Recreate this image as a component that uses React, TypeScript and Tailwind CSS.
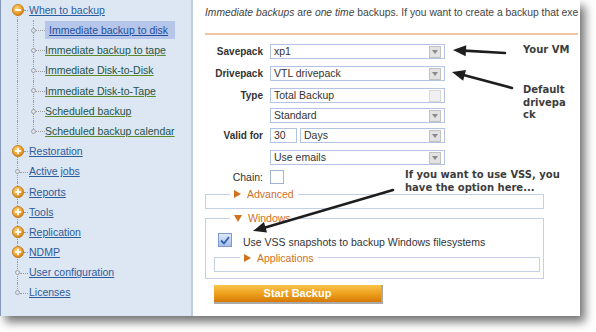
import React from "react";

const UI = { fontFamily: '"Liberation Sans", Arial, sans-serif' };
const ANN = { fontFamily: '"DejaVu Sans", Verdana, sans-serif' };

function OrangeIcon({ plus }: { plus: boolean }) {
  return (
    <svg width="12" height="12" viewBox="0 0 12 12" className="block">
      <defs>
        <radialGradient id={plus ? "gp" : "gm"} cx="40%" cy="35%" r="70%">
          <stop offset="0%" stopColor="#fcd27a" />
          <stop offset="60%" stopColor="#eea131" />
          <stop offset="100%" stopColor="#c8780e" />
        </radialGradient>
      </defs>
      <circle cx="6" cy="6" r="5.6" fill={`url(#${plus ? "gp" : "gm"})`} stroke="#c07612" strokeWidth="0.8" />
      <rect x="2.8" y="5.1" width="6.4" height="1.8" fill="#fff" />
      {plus && <rect x="5.1" y="2.8" width="1.8" height="6.4" fill="#fff" />}
    </svg>
  );
}

type Item = { label: string; kind: "minus" | "plus" | "leaf"; first?: boolean; last?: boolean };

const subItems = [
  "Immediate backup to disk",
  "Immediate backup to tape",
  "Immediate Disk-to-Disk",
  "Immediate Disk-to-Tape",
  "Scheduled backup",
  "Scheduled backup calendar",
];

const topItems: Item[] = [
  { label: "Restoration", kind: "plus" },
  { label: "Active jobs", kind: "leaf" },
  { label: "Reports", kind: "plus" },
  { label: "Tools", kind: "plus" },
  { label: "Replication", kind: "plus" },
  { label: "NDMP", kind: "plus" },
  { label: "User configuration", kind: "leaf" },
  { label: "Licenses", kind: "leaf", last: true },
];

function TopRow({ item }: { item: Item }) {
  return (
    <div className="relative flex items-center h-[20.2px]">
      <div
        className={`absolute left-[16px] border-l border-dotted border-[#9a9a9a] ${
          item.last ? "top-0 h-1/2" : item.first ? "top-1/2 bottom-0" : "top-0 bottom-0"
        }`}
      />
      {item.kind === "leaf" ? (
        <>
          <div className="absolute left-[14px] top-1/2 -mt-[2.5px] w-[5px] h-[5px] rounded-full border border-[#a0a0a0] bg-[#dde6f3]" />
          <div className="absolute left-[19px] top-1/2 w-[8px] border-t border-dotted border-[#9a9a9a]" />
        </>
      ) : (
        <>
          <div className="absolute left-[11px] top-1/2 -mt-[6px]">
            <OrangeIcon plus={item.kind === "plus"} />
          </div>
          <div className="absolute left-[23px] top-1/2 w-[4px] border-t border-dotted border-[#9a9a9a]" />
        </>
      )}
      <a className="ml-[28px] text-[10.5px] leading-none underline text-[#2c5c9c]">{item.label}</a>
    </div>
  );
}

function SubRow({ label, idx }: { label: string; idx: number }) {
  const last = idx === subItems.length - 1;
  const active = idx === 0;
  return (
    <div className="relative flex items-center h-[20.2px]">
      <div className="absolute left-[16px] top-0 bottom-0 border-l border-dotted border-[#9a9a9a]" />
      <div
        className={`absolute left-[32px] border-l border-dotted border-[#9a9a9a] ${
          last ? "top-0 h-1/2" : "top-0 bottom-0"
        }`}
      />
      <div className="absolute left-[30px] top-1/2 -mt-[2.5px] w-[5px] h-[5px] rounded-full border border-[#a0a0a0] bg-[#dde6f3]" />
      <div className="absolute left-[35px] top-1/2 w-[9px] border-t border-dotted border-[#9a9a9a]" />
      {active ? (
        <div className="ml-[44px] h-[18px] w-[130px] bg-[#b6c5ea] flex items-center pl-[4px]">
          <a className="text-[10.5px] leading-none underline text-[#24509a]">{label}</a>
        </div>
      ) : (
        <a className="ml-[44px] text-[10.5px] leading-none underline text-[#225449] decoration-[#5f8a2a]">{label}</a>
      )}
    </div>
  );
}

function Arrow({ x1, y1, x2, y2 }: { x1: number; y1: number; x2: number; y2: number }) {
  const dx = x2 - x1;
  const dy = y2 - y1;
  const len = Math.hypot(dx, dy);
  const ux = dx / len;
  const uy = dy / len;
  const hl = 13;
  const hw = 5.5;
  const bx = x2 - ux * hl;
  const by = y2 - uy * hl;
  const p1 = `${x2},${y2}`;
  const p2 = `${bx - uy * hw},${by + ux * hw}`;
  const p3 = `${bx + uy * hw},${by - ux * hw}`;
  return (
    <g>
      <line x1={x1} y1={y1} x2={bx + ux * 2} y2={by + uy * 2} stroke="#1e1e1e" strokeWidth="2.6" strokeLinecap="round" />
      <polygon points={`${p1} ${p2} ${p3}`} fill="#1e1e1e" />
    </g>
  );
}

function DropBtn({ light }: { light?: boolean }) {
  return (
    <div
      className={`w-[12px] h-[12px] mr-[3px] border flex items-center justify-center ${
        light ? "bg-[#f0f0f0] border-[#d8d8d8]" : "bg-[#e2e2e2] border-[#c2c2c2]"
      }`}
    >
      {!light && (
        <svg width="6" height="4" viewBox="0 0 6 4">
          <polygon points="0,0 6,0 3,4" fill="#8a8a8a" />
        </svg>
      )}
    </div>
  );
}

function Select({ value, w, light }: { value: string; w: string; light?: boolean }) {
  return (
    <div className={`${w} h-[15px] border border-[#b3c3e3] bg-white flex items-center justify-between`}>
      <span className="pl-[3px] text-[10.5px] leading-none text-[#333]">{value}</span>
      <DropBtn light={light} />
    </div>
  );
}

function Label({ text }: { text?: string }) {
  return (
    <div className="w-[58px] text-right text-[10px] font-bold text-[#333] leading-none">{text ?? ""}</div>
  );
}

function Legend({ text, down }: { text: string; down?: boolean }) {
  return (
    <legend className="flex items-center gap-[6px] px-[4px] text-[10.5px] leading-[14px] text-[#d2701c]">
      {down ? (
        <svg width="8" height="7" viewBox="0 0 8 7">
          <polygon points="0,0 8,0 4,7" fill="#d2701c" />
        </svg>
      ) : (
        <svg width="7" height="8" viewBox="0 0 7 8">
          <polygon points="0,0 7,4 0,8" fill="#d2701c" />
        </svg>
      )}
      <span>{text}</span>
    </legend>
  );
}

export default function App() {
  return (
    <div className="w-[596px] h-[332px] bg-white overflow-hidden" style={UI}>
      <div className="relative w-[580px] h-[316px] flex bg-white shadow-[5px_6px_9px_rgba(0,0,0,0.55)]">
        {/* Sidebar */}
        <div className="w-[193px] h-full bg-[#dde6f3] border-l border-[#8799b8] border-r-2 border-r-[#c0cde0] pt-0">
          <TopRow item={{ label: "When to backup", kind: "minus", first: true }} />
          {subItems.map((s, i) => (
            <SubRow key={s} label={s} idx={i} />
          ))}
          {topItems.map((it) => (
            <TopRow key={it.label} item={it} />
          ))}
        </div>

        {/* Main */}
        <div className="flex-1 h-full overflow-hidden pl-[12px]">
          <div className="mt-[6px] h-[14px] whitespace-nowrap overflow-hidden text-[10.3px] leading-[14px] text-[#444]">
            <i>Immediate backups</i> are <i>one time</i> backups. If you want to create a backup that exe
          </div>
          <div className="mt-[13px] h-[2px] bg-[#eec6a4] mr-[2px]" />

          <div className="mt-[9px] flex flex-col">
            <div className="flex items-center gap-[7px]">
              <Label text="Savepack" />
              <Select value="xp1" w="w-[175px]" />
            </div>
            <div className="mt-[7px] flex items-center gap-[7px]">
              <Label text="Drivepack" />
              <Select value="VTL drivepack" w="w-[175px]" />
            </div>
            <div className="mt-[7px] flex items-center gap-[7px]">
              <Label text="Type" />
              <Select value="Total Backup" w="w-[175px]" light />
            </div>
            <div className="mt-[5px] flex items-center gap-[7px]">
              <Label />
              <Select value="Standard" w="w-[175px]" />
            </div>
            <div className="mt-[5px] flex items-center gap-[7px]">
              <Label text="Valid for" />
              <div className="flex items-center gap-[3px]">
                <div className="w-[27px] h-[15px] border border-[#b3c3e3] bg-white flex items-center pl-[3px] text-[10.5px] leading-none text-[#333]">
                  30
                </div>
                <Select value="Days" w="w-[145px]" />
              </div>
            </div>
            <div className="mt-[7px] flex items-center gap-[7px]">
              <Label />
              <Select value="Use emails" w="w-[175px]" />
            </div>
            <div className="mt-[5px] flex items-center gap-[7px]">
              <div className="w-[58px] text-right text-[10.5px] text-[#333] leading-none">Chain:</div>
              <div className="w-[14px] h-[14px] border border-[#9fb3da] bg-white" />
            </div>
          </div>

          <fieldset className="mt-[3px] w-[339px] h-[22px] border border-[#c4d0e8] pl-[24px]">
            <Legend text="Advanced" />
          </fieldset>

          <fieldset className="mt-[2px] w-[339px] h-[68px] border border-[#c4d0e8] pl-[24px]">
            <Legend text="Windows" down />
            <div className="-ml-[24px] flex items-center mt-[8px]">
              <div className="ml-[12px] w-[14px] h-[14px] border border-[#7d9ad0] bg-gradient-to-b from-[#dfe8f8] to-[#a9bfe6] flex items-center justify-center">
                <svg width="10" height="9" viewBox="0 0 10 9">
                  <polyline points="1,4.5 4,7.5 9,1" fill="none" stroke="#2f5fb5" strokeWidth="1.8" />
                </svg>
              </div>
              <span className="ml-[11px] mt-[4px] text-[10.5px] leading-none text-[#333]">
                Use VSS snapshots to backup Windows filesystems
              </span>
            </div>
            <fieldset className="-ml-[16px] mt-[3px] w-[326px] h-[21px] border border-[#c4d0e8] pl-[25px]">
              <Legend text="Applications" />
            </fieldset>
          </fieldset>

          <div className="ml-[9px] mt-[6px] w-[169px] h-[19px] bg-gradient-to-b from-[#fbc449] via-[#eea11c] to-[#d67a05] border-r-2 border-b-2 border-[#a9a9a9] flex items-center justify-center text-white font-bold text-[11px]">
            Start Backup
          </div>
        </div>

        {/* Annotation overlay */}
        <div className="absolute inset-0 pointer-events-none">
          <svg width="580" height="316" className="absolute left-0 top-0">
            <Arrow x1={505} y1={53} x2={453} y2={50} />
            <Arrow x1={512} y1={88} x2={452} y2={72} />
            <Arrow x1={393} y1={190} x2={253} y2={231} />
          </svg>
          <div className="absolute left-[523px] top-[44px] text-[10px] font-bold text-[#3d3d3d] leading-[12.5px]" style={ANN}>
            Your VM
          </div>
          <div className="absolute left-[523px] top-[84px] text-[10px] font-bold text-[#3d3d3d] leading-[12.5px]" style={ANN}>
            Default
            <br />
            drivepa
            <br />
            ck
          </div>
          <div className="absolute left-[405px] top-[168px] text-[10px] font-bold text-[#3d3d3d] leading-[13px] whitespace-nowrap" style={ANN}>
            If you want to use VSS, you
            <br />
            have the option here...
          </div>
        </div>
      </div>
    </div>
  );
}
